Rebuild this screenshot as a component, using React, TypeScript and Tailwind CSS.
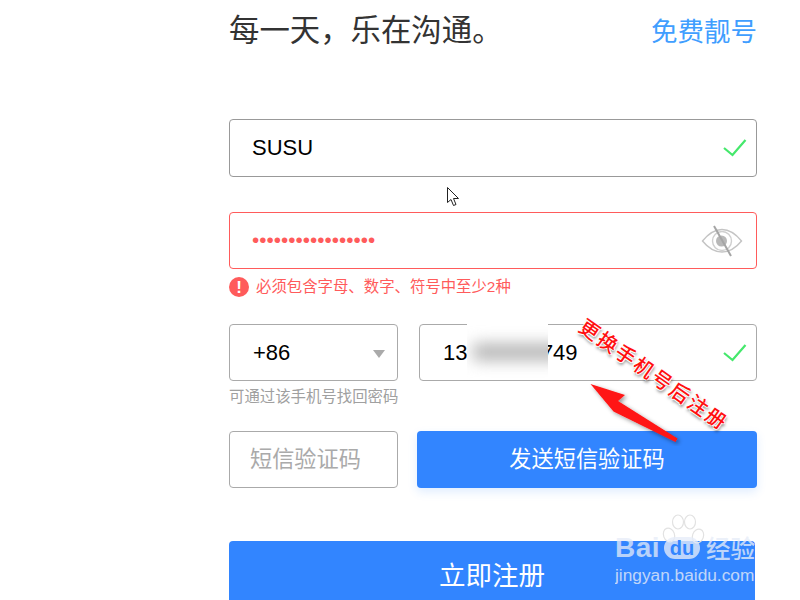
const sans = "font-['Liberation_Sans','Noto_Sans_CJK_SC',sans-serif]";

function Check() {
  return (
    <svg width="24" height="18" viewBox="0 0 24 18" fill="none" className="shrink-0">
      <path d="M1 9L9.5 16L22.5 1" stroke="#45e86c" strokeWidth="2.2" />
    </svg>
  );
}

function EyeOff() {
  return (
    <svg width="42" height="32" viewBox="0 0 42 32" fill="none">
      <path d="M1.5 16C8 8 14 4.5 21 4.5S34 8 40.5 16C34 24 28 27 21 27S8 24 1.5 16Z" stroke="#c4c4c4" strokeWidth="1.4" />
      <circle cx="21" cy="16" r="9.5" stroke="#cfcfcf" strokeWidth="1.4" />
      <circle cx="20.5" cy="16" r="5.5" fill="#b8b8b8" />
      <path d="M13 1L30 31" stroke="#a5a5a5" strokeWidth="2" />
    </svg>
  );
}

function Arrow() {
  return (
    <svg width="100" height="66" viewBox="0 0 100 66" fill="none" className="absolute left-[585px] top-[380px]">
      <defs>
        <filter id="s" x="-20%" y="-20%" width="140%" height="140%">
          <feDropShadow dx="2" dy="2" stdDeviation="2" floodColor="#000" floodOpacity="0.4" />
        </filter>
      </defs>
      <path d="M5.5 4L40 15L33 21L92.5 58.5L90.5 62L28.5 31.5L5.5 4Z" fill="#ff1414" filter="url(#s)" />
    </svg>
  );
}

function Cursor() {
  return (
    <svg width="14" height="21" viewBox="0 0 14 21" fill="white" className="absolute left-[447px] top-[187px]">
      <path d="M0.5 0.5V15.5L4 12.5L6.5 18.5L9 17.5L6.5 11.5H11.5L0.5 0.5Z" stroke="#222" strokeWidth="1" />
    </svg>
  );
}

function Watermark() {
  return (
    <div className="absolute left-[615px] top-[512px] h-[72px] w-[144px] overflow-hidden">
      <svg width="46" height="34" viewBox="0 0 46 34" fill="none" className="absolute left-[46px] top-[1px]" stroke="#e2e2e2" strokeWidth="1.2">
        <ellipse cx="8" cy="22" rx="5.5" ry="7" transform="rotate(-20 8 22)" />
        <ellipse cx="17" cy="9" rx="5.5" ry="7" />
        <ellipse cx="29" cy="9" rx="5.5" ry="7" />
        <ellipse cx="37" cy="23" rx="5.5" ry="7" transform="rotate(20 37 23)" />
      </svg>
      <div className="absolute left-0 top-[21px] flex h-[30px] items-center">
        <span className={`${sans} w-[49px] text-[28px] leading-none font-bold tracking-[0.5px] text-[rgba(230,236,248,0.75)]`}>Bai</span>
        <span className={`${sans} flex h-[22px] w-[36px] items-center justify-center rounded-[11px] bg-[rgba(230,236,248,0.78)] text-[20px] leading-none font-bold text-[#3285ff]`}>du</span>
        <span className="ml-[6px] font-['Noto_Sans_CJK_SC',sans-serif] text-[24.5px] leading-none font-medium text-[rgba(230,236,248,0.78)]">经验</span>
      </div>
      <div className={`${sans} absolute left-0 top-[53px] text-[17.3px] leading-[20px] whitespace-nowrap text-[rgba(230,236,248,0.8)]`}>jingyan.baidu.com</div>
    </div>
  );
}

export default function App() {
  return (
    <div className={`${sans} relative h-[600px] w-[800px] overflow-hidden bg-white pr-[43px] pl-[229px]`}>
      <header className="mb-[59px] flex h-[60px] items-center justify-between">
        <h1 className="text-[30.4px] leading-none font-normal text-[#333]">每一天，乐在沟通。</h1>
        <a className="mt-[4px] text-[26.5px] leading-none text-[#409eff]">免费靓号</a>
      </header>

      <div className="flex h-[58px] items-center justify-between rounded-[4px] border border-[#999] pr-[9px] pl-[22px]">
        <span className="mb-[2px] text-[22px] text-black">SUSU</span>
        <Check />
      </div>

      <div className="mt-[35px] flex h-[57px] items-center justify-between rounded-[4px] border border-[#ff5b5b] pr-[13px] pl-[22px]">
        <span className="text-[20.7px] leading-none text-[#ff5b5b]">•••••••••••••••••</span>
        <EyeOff />
      </div>
      <div className="mt-[8px] mb-[27px] flex h-[20px] items-center text-[15.4px] leading-none text-[#ff5b5b]">
        <span className="mr-[7px] flex h-[20px] w-[20px] items-center justify-center rounded-full bg-[#ff5b5b] text-[17px] font-bold text-white">!</span>
        必须包含字母、数字、符号中至少2种
      </div>

      <div className="flex gap-[21px]">
        <div className="flex h-[57px] w-[169px] items-center justify-between rounded-[4px] border border-[#aaa] pr-[12px] pl-[23px]">
          <span className="text-[22px] text-black">+86</span>
          <span className="mt-[2px] h-0 w-0 border-x-[6px] border-t-[8px] border-x-transparent border-t-[#aaa]" />
        </div>
        <div className="flex h-[57px] flex-1 items-center justify-between rounded-[4px] border border-[#aaa] pr-[9px] pl-[23px]">
          <span className="text-[22px] text-black">13000000749</span>
          <Check />
        </div>
      </div>
      <p className="mt-[8px] mb-[26px] h-[16px] text-[15.4px] leading-[16px] text-[#a0a0a0]">可通过该手机号找回密码</p>

      <div className="flex gap-[19px]">
        <div className="flex h-[57px] w-[169px] items-center rounded-[4px] border border-[#aaa] pl-[20px] text-[22.2px] text-[#aaa]">短信验证码</div>
        <button className="h-[57px] flex-1 rounded-[4px] bg-[#3285ff] text-[22.2px] text-white shadow-[0_4px_10px_rgba(50,133,255,0.15)]">发送短信验证码</button>
      </div>

      <button className="mt-[53px] mr-[2px] flex h-[60px] w-[526px] items-start justify-center rounded-t-[4px] bg-[#3285ff] pt-[16px] text-[26.5px] leading-[38px] text-white">立即注册</button>

      {/* Privacy blur laid over the phone number */}
      <div className="absolute left-[467px] top-[310px] h-[68px] w-[81px] overflow-hidden bg-white">
        <div className="absolute left-[6px] top-[34px] h-[16px] w-[90px] bg-[#b0b0b0] blur-[8px]" />
      </div>

      <Arrow />
      <div className="absolute left-[566px] top-[360px] origin-center rotate-[35deg] font-['Noto_Sans_CJK_SC',sans-serif] text-[20px] leading-[28px] font-medium tracking-[2px] whitespace-nowrap text-[#ff1010] [text-shadow:1px_0_0_#fff,-1px_0_0_#fff,0_1px_0_#fff,0_-1px_0_#fff,2px_2px_3px_rgba(0,0,0,0.5)]">
        更换手机号后注册
      </div>
      <Cursor />
      <Watermark />
    </div>
  );
}
